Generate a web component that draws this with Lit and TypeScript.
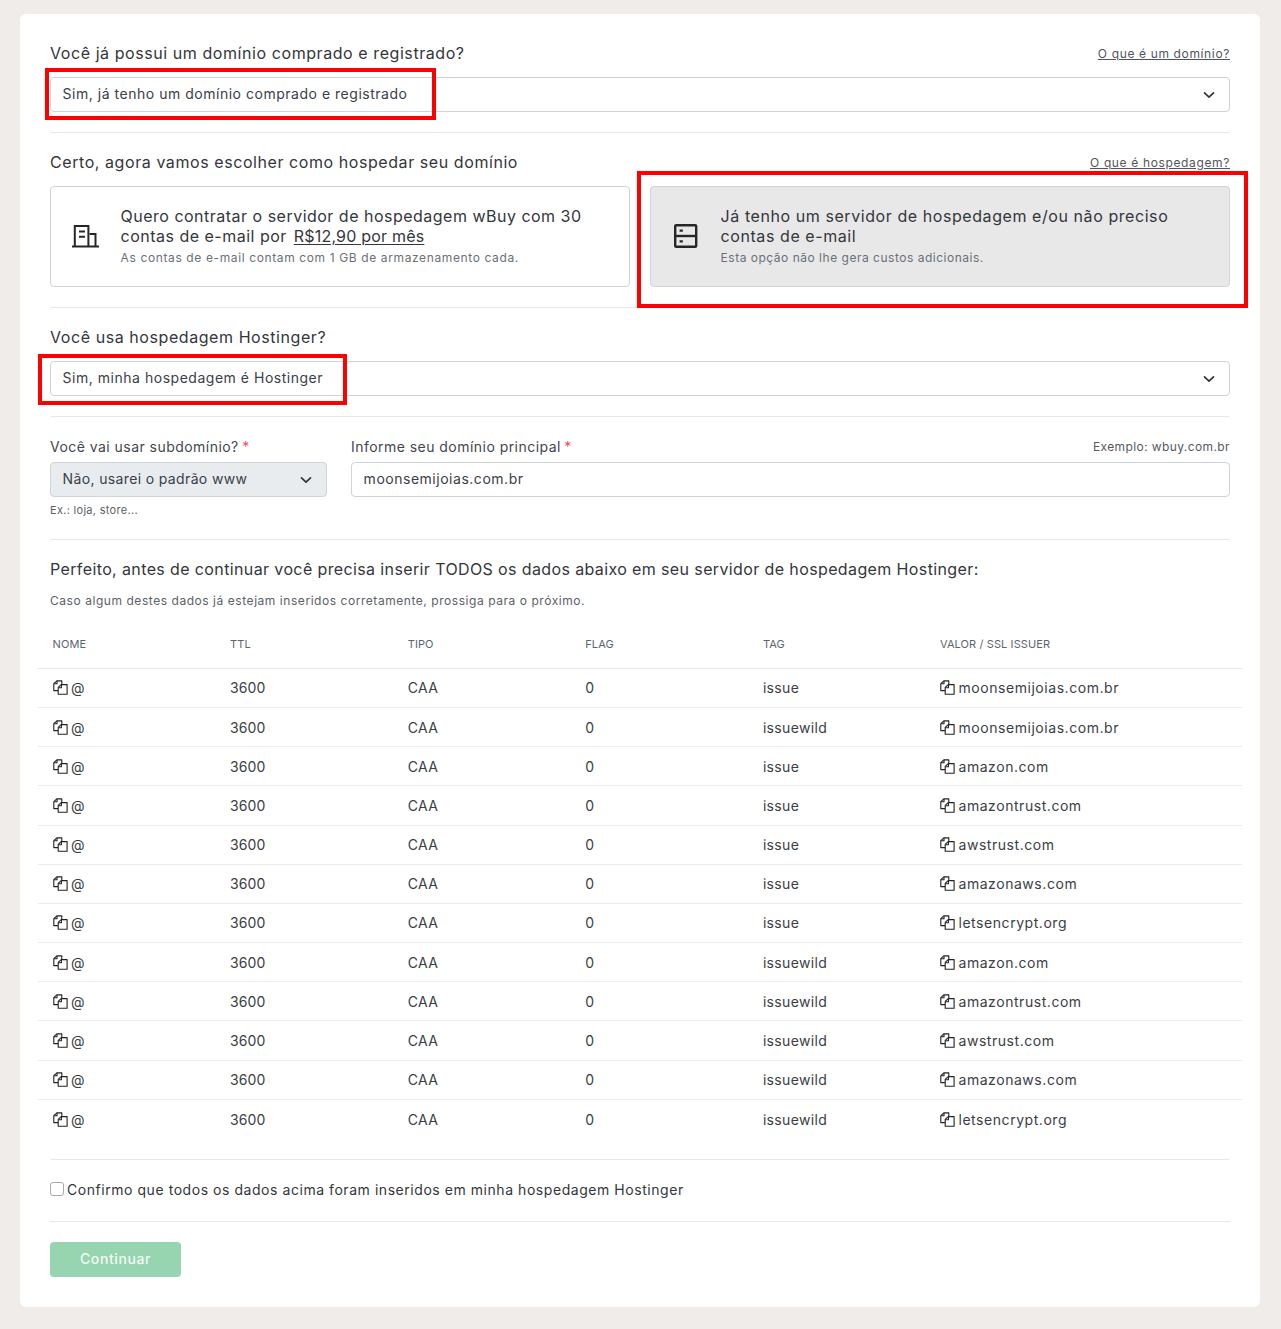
import { LitElement, html, css } from "lit";
import { customElement } from "lit/decorators.js";

const chevron = html`<svg class="chev" width="12" height="8" viewBox="0 0 12 8" fill="none" stroke="currentColor" stroke-width="1.7" stroke-linecap="round" stroke-linejoin="round"><path d="M1.5 1.8 6 6.2l4.5-4.4"/></svg>`;

const copyIcon = html`<svg class="copy" width="15" height="15" viewBox="0 0 15 15" fill="none" stroke="#222" stroke-width="1.1" stroke-linejoin="round"><path d="M5 10.6H.8V3.6L3.8.9h5v3.4"/><path d="M4 1.1v2.7H1"/><path d="M5.2 7.4 8.2 4.6h5.9v9.6H5.2z"/><path d="M8.4 4.8v2.9H5.4"/></svg>`;

const rows: [string, string][] = [
  ["issue", "moonsemijoias.com.br"],
  ["issuewild", "moonsemijoias.com.br"],
  ["issue", "amazon.com"],
  ["issue", "amazontrust.com"],
  ["issue", "awstrust.com"],
  ["issue", "amazonaws.com"],
  ["issue", "letsencrypt.org"],
  ["issuewild", "amazon.com"],
  ["issuewild", "amazontrust.com"],
  ["issuewild", "awstrust.com"],
  ["issuewild", "amazonaws.com"],
  ["issuewild", "letsencrypt.org"],
];

@customElement("app-root")
export class AppRoot extends LitElement {
  static styles = css`
    :host {
      display: block;
      min-height: 1329px;
      background: #f0ecea;
      padding: 14px 21px 22px 20px;
      box-sizing: border-box;
      font-family: "Inter", "Liberation Sans", sans-serif;
      color: #2b2f36;
    }
    * { box-sizing: border-box; }
    .card {
      position: relative;
      background: #fff;
      border-radius: 6px;
      padding: 27px 30px 30px;
      height: 1293px;
    }
    .q {
      display: flex;
      justify-content: space-between;
      align-items: center;
      height: 24px;
      margin-bottom: 12px;
      font-size: 16px;
      letter-spacing: 0.57px;
      color: #33363b;
    }
    .q a {
      font-size: 12px;
      letter-spacing: 0.64px;
      color: #50555c;
      text-decoration: underline;
    }
    .select, .input {
      display: flex;
      align-items: center;
      justify-content: space-between;
      height: 35px;
      border: 1px solid #ced4da;
      border-radius: 4px;
      padding: 0 14px 2px 11.6px;
      font-size: 14px;
      letter-spacing: 0.52px;
      color: #3a4048;
      background: #fff;
    }
    .select.disabled { background: #e9ecef; letter-spacing: 0.36px; }
    .chev { color: #33373d; flex: none; margin-top: 2px; }
    hr {
      border: 0;
      height: 1px;
      background: #e8e8e8;
      margin: 20px 0 17px;
    }
    .options {
      display: grid;
      grid-template-columns: 1fr 1fr;
      gap: 20px;
    }
    .option {
      display: flex;
      align-items: center;
      height: 101px;
      border: 1px solid #ced4da;
      border-radius: 4px;
      padding: 0 20px 0 21px;
      gap: 19.6px;
    }
    .option.active { background: #e8e8e8; }
    .option svg { flex: none; }
    .option .text { margin-top: -1px; }
    .title {
      font-size: 16px;
      line-height: 20px;
      letter-spacing: 0.49px;
      color: #33363b;
    }
    .active .title { letter-spacing: 0.57px; }
    .title u {
      text-underline-offset: 2px;
      letter-spacing: 0.2px;
      margin-left: 2px;
    }
    .desc {
      font-size: 12px;
      line-height: 18px;
      letter-spacing: 0.62px;
      color: #6a7078;
      margin-top: 3px;
    }
    .active .desc { letter-spacing: 0.51px; }
    .fields {
      display: grid;
      grid-template-columns: 277px 1fr;
      column-gap: 24px;
    }
    .field-label {
      display: flex;
      justify-content: space-between;
      align-items: center;
      height: 20px;
      margin-top: 2px;
      margin-bottom: 6px;
      font-size: 14px;
      letter-spacing: 0.46px;
      color: #42474e;
    }
    .field-label em { font-style: normal; color: #e8505b; margin-left: -1px; }
    .field-label small { font-size: 12px; color: #555a61; letter-spacing: 0.4px; }
    .hint {
      font-size: 11px;
      letter-spacing: 0.3px;
      line-height: 16px;
      color: #5c6168;
      margin-top: 5px;
    }
    .fields + hr { margin-top: 21px; }
    .lead {
      height: 24px;
      line-height: 24px;
      font-size: 16px;
      letter-spacing: 0.38px;
      color: #33363b;
    }
    .sub {
      height: 20px;
      line-height: 20px;
      margin-top: 10px;
      font-size: 12px;
      letter-spacing: 0.55px;
      color: #5c6168;
    }
    table {
      width: 1204px;
      margin: 9px -12px 0;
      border-collapse: collapse;
      table-layout: fixed;
    }
    th, td {
      width: 177.6px;
      padding: 0 0 0 14.5px;
      text-align: left;
      white-space: nowrap;
    }
    th:last-child, td:last-child { width: auto; padding-left: 14px; }
    th {
      height: 48.32px;
      font-size: 11px;
      font-weight: 400;
      letter-spacing: 0.1px;
      color: #5b6671;
      border-bottom: 1px solid #e8e8e8;
    }
    td {
      height: 39.18px;
      font-size: 14px;
      letter-spacing: 0.34px;
      color: #3a3e45;
      border-bottom: 1px solid #ececec;
    }
    td.num { letter-spacing: 0.1px; }
    td:last-child { letter-spacing: 0.55px; }
    tr:last-child td { border-bottom: 0; }
    .copy { vertical-align: -2px; margin-right: 3.5px; }
    .confirm {
      display: flex;
      align-items: center;
      height: 20px;
      font-size: 14px;
      letter-spacing: 0.55px;
      color: #33363b;
    }
    .confirm input {
      appearance: none;
      width: 14px;
      height: 14px;
      margin: 0 3px 0 0;
      border: 1px solid #a9a9a9;
      border-radius: 3px;
      background: #fff;
    }
    .sep-a { margin: 21px 0 19px; }
    .sep-b { margin: 22px 0 20px; }
    .btn {
      display: flex;
      align-items: center;
      justify-content: center;
      width: 131px;
      height: 35px;
      padding-bottom: 2px;
      border-radius: 4px;
      background: #96d5b0;
      color: #f4fbf7;
      font-size: 14px;
      font-weight: 500;
      letter-spacing: 0.6px;
    }
    .mark {
      position: absolute;
      border: 4.5px solid #fe0000;
      pointer-events: none;
    }
    .m1 { left: 25px; top: 54px; width: 391px; height: 52px; }
    .m2 { left: 617px; top: 157px; width: 611px; height: 137px; }
    .m3 { left: 18px; top: 340px; width: 309px; height: 51px; }
  `;

  render() {
    return html`
      <div class="card">
        <div class="q"><span>Você já possui um domínio comprado e registrado?</span><a>O que é um domínio?</a></div>
        <div class="select"><span>Sim, já tenho um domínio comprado e registrado</span>${chevron}</div>
        <hr />
        <div class="q"><span>Certo, agora vamos escolher como hospedar seu domínio</span><a>O que é hospedagem?</a></div>
        <div class="options">
          <div class="option">
            <svg width="29" height="25" viewBox="0 0 29 25" fill="none" stroke="#262626" stroke-width="2"><path d="M0 22.5h27"/><path d="M2.8 22.5V2H16.4V22.5"/><path d="M7 7.5h6M7 12.8h6"/><path d="M17.5 10H23.5V22.5"/></svg>
            <div class="text">
              <div class="title">Quero contratar o servidor de hospedagem wBuy com 30 contas de e-mail por <u>R$12,90 por mês</u></div>
              <div class="desc">As contas de e-mail contam com 1 GB de armazenamento cada.</div>
            </div>
          </div>
          <div class="option active">
            <svg width="29" height="25" viewBox="0 0 29 25" fill="none" stroke="#262626" stroke-width="2.4"><rect x="3.2" y="1.2" width="21" height="21.6" rx="1"/><path d="M3.2 12h21"/><path d="M7.6 6.6h3.2M7.6 17.4h3.2" stroke-width="2.2"/></svg>
            <div class="text">
              <div class="title">Já tenho um servidor de hospedagem e/ou não preciso contas de e-mail</div>
              <div class="desc">Esta opção não lhe gera custos adicionais.</div>
            </div>
          </div>
        </div>
        <hr />
        <div class="q"><span>Você usa hospedagem Hostinger?</span></div>
        <div class="select"><span>Sim, minha hospedagem é Hostinger</span>${chevron}</div>
        <hr />
        <div class="fields">
          <div>
            <div class="field-label"><span>Você vai usar subdomínio? <em>*</em></span></div>
            <div class="select disabled"><span>Não, usarei o padrão www</span>${chevron}</div>
            <div class="hint">Ex.: loja, store...</div>
          </div>
          <div>
            <div class="field-label"><span>Informe seu domínio principal <em>*</em></span><small>Exemplo: wbuy.com.br</small></div>
            <div class="input">moonsemijoias.com.br</div>
          </div>
        </div>
        <hr />
        <div class="lead">Perfeito, antes de continuar você precisa inserir TODOS os dados abaixo em seu servidor de hospedagem Hostinger:</div>
        <div class="sub">Caso algum destes dados já estejam inseridos corretamente, prossiga para o próximo.</div>
        <table>
          <thead>
            <tr><th>NOME</th><th>TTL</th><th>TIPO</th><th>FLAG</th><th>TAG</th><th>VALOR / SSL ISSUER</th></tr>
          </thead>
          <tbody>
            ${rows.map(
              ([tag, val]) => html`<tr>
                <td>${copyIcon}@</td><td class="num">3600</td><td>CAA</td><td>0</td><td>${tag}</td><td>${copyIcon}${val}</td>
              </tr>`
            )}
          </tbody>
        </table>
        <hr class="sep-a" />
        <label class="confirm"><input type="checkbox" />Confirmo que todos os dados acima foram inseridos em minha hospedagem Hostinger</label>
        <hr class="sep-b" />
        <div class="btn">Continuar</div>
        <div class="mark m1"></div>
        <div class="mark m2"></div>
        <div class="mark m3"></div>
      </div>
    `;
  }
}
